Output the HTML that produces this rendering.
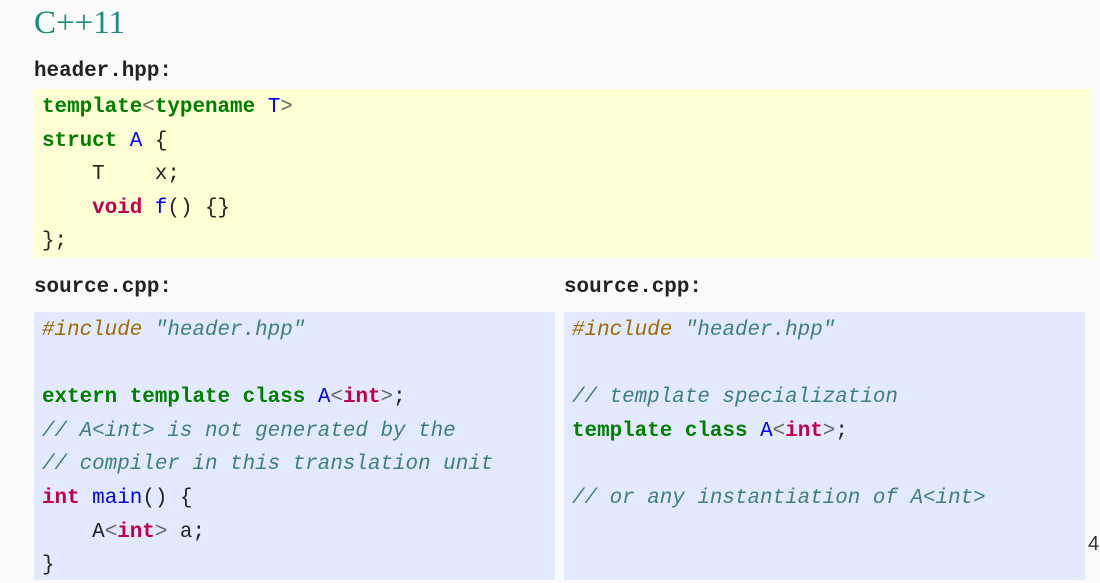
<!DOCTYPE html>
<html><head><meta charset="utf-8"><style>
body{margin:0;width:1100px;height:580px;background:#fafafa;position:relative;overflow:hidden;font-family:"Liberation Mono",monospace;color:#222}
.t{position:absolute;left:34px;top:5px;font-family:"Liberation Serif",serif;font-size:33px;color:#1a8c7c}
.lbl{position:absolute;font-size:20.9px;font-weight:bold;color:#222;line-height:30px}
.box{position:absolute;margin:0;padding:2px 0 0 8px;box-sizing:border-box;font-size:20.9px;line-height:33.6px;white-space:pre;font-family:"Liberation Mono",monospace}
.y{background:#ffffd6}
.b{background:#e3eaff}
.k{color:#008000;font-weight:bold}
.n{color:#0000ff}
.r{color:#c0004a;font-weight:bold}
.o{color:#666}
.c{color:#3f7f80;font-style:italic}
.p{color:#a06a00;font-style:italic}
.num{position:absolute;left:1088px;top:533px;font-family:"Liberation Sans",sans-serif;font-size:20px;color:#333}
</style></head><body>
<div class="t">C++11</div>
<div class="lbl" style="left:34px;top:57px">header.hpp:</div>
<pre class="box y" style="left:34px;top:89px;width:1058px;height:169px"><span class="k">template</span><span class="o">&lt;</span><span class="k">typename</span> <span class="n">T</span><span class="o">&gt;</span>
<span class="k">struct</span> <span class="n">A</span> {
    T    x;
    <span class="r">void</span> <span class="n">f</span>() {}
};</pre>
<div class="lbl" style="left:34px;top:273px">source.cpp:</div>
<div class="lbl" style="left:564px;top:273px">source.cpp:</div>
<pre class="box b" style="left:34px;top:312px;width:521px;height:268px"><span class="p">#include</span> <span class="c">"header.hpp"</span>

<span class="k">extern</span> <span class="k">template</span> <span class="k">class</span> <span class="n">A</span><span class="o">&lt;</span><span class="r">int</span><span class="o">&gt;</span>;
<span class="c">// A&lt;int&gt; is not generated by the</span>
<span class="c">// compiler in this translation unit</span>
<span class="r">int</span> <span class="n">main</span>() {
    A<span class="o">&lt;</span><span class="r">int</span><span class="o">&gt;</span> a;
}</pre>
<pre class="box b" style="left:564px;top:312px;width:521px;height:268px"><span class="p">#include</span> <span class="c">"header.hpp"</span>

<span class="c">// template specialization</span>
<span class="k">template</span> <span class="k">class</span> <span class="n">A</span><span class="o">&lt;</span><span class="r">int</span><span class="o">&gt;</span>;

<span class="c">// or any instantiation of A&lt;int&gt;</span></pre>
<div class="num">4</div>
</body></html>
